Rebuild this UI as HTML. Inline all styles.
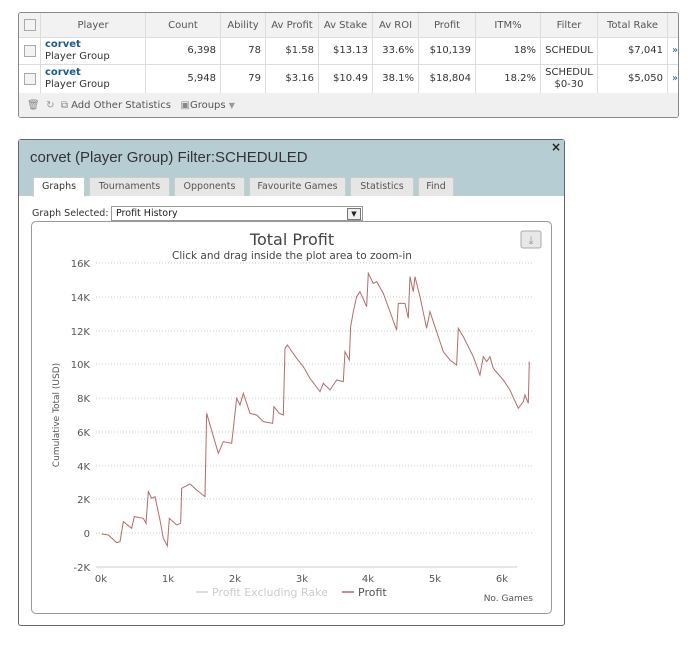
<!DOCTYPE html>
<html><head><style>
body{margin:0;width:700px;height:663px;background:#fff;font-family:"DejaVu Sans","Liberation Sans",sans-serif;position:relative;overflow:hidden}
.tbl{position:absolute;left:18px;top:12px;width:661px;height:106px;border:1px solid #888;border-radius:3px;box-sizing:border-box;overflow:hidden;font-size:10px;color:#333}
.row{position:absolute;left:0;width:100%;border-bottom:1px solid #ddd}
.c{position:absolute;top:0;height:100%;border-right:1px solid #ddd;box-sizing:border-box;display:flex;align-items:center;padding:0 4px;white-space:nowrap}
.cb{width:10px;height:10px;border:1px solid #aaa;background:#f3f3f3}
.r{justify-content:flex-end}.m{justify-content:center}
a{color:#1c5c8c;font-weight:bold;text-decoration:none}
.dlg{position:absolute;left:18px;top:139px;width:547px;height:487px;border:1px solid #666;box-sizing:border-box;border-radius:3px}
.hd{position:absolute;left:0;top:0;width:100%;height:56px;background:#b7cdd4}
.tab{position:absolute;top:37px;height:19px;background:#e6e6e6;border:1px solid #ccc;border-bottom:none;font-size:9.5px;color:#555;text-align:center;line-height:18px;box-sizing:border-box;border-radius:2px 2px 0 0}
</style></head><body>
<div class="tbl">
 <div class="row" style="top:0;height:24px;background:#f2f2f2;color:#555">
  <div class="c m" style="left:0;width:22px"><div class="cb"></div></div>
  <div class="c m" style="left:22px;width:105px">Player</div>
  <div class="c m" style="left:127px;width:75px">Count</div>
  <div class="c m" style="left:202px;width:45px">Ability</div>
  <div class="c m" style="left:247px;width:53px">Av Profit</div>
  <div class="c m" style="left:300px;width:54px">Av Stake</div>
  <div class="c m" style="left:354px;width:46px">Av ROI</div>
  <div class="c m" style="left:400px;width:57px">Profit</div>
  <div class="c m" style="left:457px;width:65px">ITM%</div>
  <div class="c m" style="left:522px;width:57px">Filter</div>
  <div class="c m" style="left:579px;width:70px">Total Rake</div>
 </div>
 <div class="row" style="top:24px;height:27px">
  <div class="c m" style="left:0;width:22px"><div class="cb"></div></div>
  <div class="c" style="left:22px;width:105px;line-height:12px"><div><a>corvet</a><br>Player Group</div></div>
  <div class="c r" style="left:127px;width:75px">6,398</div>
  <div class="c r" style="left:202px;width:45px">78</div>
  <div class="c r" style="left:247px;width:53px">$1.58</div>
  <div class="c r" style="left:300px;width:54px">$13.13</div>
  <div class="c r" style="left:354px;width:46px">33.6%</div>
  <div class="c r" style="left:400px;width:57px">$10,139</div>
  <div class="c r" style="left:457px;width:65px">18%</div>
  <div class="c m" style="left:522px;width:57px;padding:0 1px">SCHEDUL</div>
  <div class="c r" style="left:579px;width:70px">$7,041</div>
  <div class="c" style="left:649px;width:12px;color:#1c5c8c;border:none">»</div>
 </div>
 <div class="row" style="top:51px;height:29px">
  <div class="c m" style="left:0;width:22px"><div class="cb"></div></div>
  <div class="c" style="left:22px;width:105px;line-height:12px"><div><a>corvet</a><br>Player Group</div></div>
  <div class="c r" style="left:127px;width:75px">5,948</div>
  <div class="c r" style="left:202px;width:45px">79</div>
  <div class="c r" style="left:247px;width:53px">$3.16</div>
  <div class="c r" style="left:300px;width:54px">$10.49</div>
  <div class="c r" style="left:354px;width:46px">38.1%</div>
  <div class="c r" style="left:400px;width:57px">$18,804</div>
  <div class="c r" style="left:457px;width:65px">18.2%</div>
  <div class="c m" style="left:522px;width:57px;text-align:center;line-height:12px;padding:0 1px">SCHEDUL<br>$0-30</div>
  <div class="c r" style="left:579px;width:70px">$5,050</div>
  <div class="c" style="left:649px;width:12px;color:#1c5c8c;border:none">»</div>
 </div>
 <div class="row" style="top:80px;height:26px;background:#f0f0f0;border:none;color:#555;line-height:26px;padding-left:8px;box-sizing:border-box">
  <span style="color:#888">🗑</span>&nbsp;&nbsp;<span style="color:#999">↻</span>&nbsp;&nbsp;<span style="color:#888">⧉</span> Add Other Statistics &nbsp;&nbsp;<span style="color:#888">▣</span>Groups <span style="color:#999;font-size:8px">▼</span>
 </div>
</div>

<div class="dlg">
 <div class="hd"></div>
 <div style="position:absolute;left:11px;top:9px;font-size:15px;color:#333;font-family:'Liberation Sans',sans-serif">corvet (Player Group) Filter:SCHEDULED</div>
 <div style="position:absolute;right:3px;top:0px;font-size:12px;font-weight:bold;color:#222">×</div>
 <div class="tab" style="left:14px;width:52px;background:#fff;color:#333;height:20px">Graphs</div>
 <div class="tab" style="left:70px;width:81px">Tournaments</div>
 <div class="tab" style="left:155px;width:71px">Opponents</div>
 <div class="tab" style="left:230px;width:97px">Favourite Games</div>
 <div class="tab" style="left:331px;width:64px">Statistics</div>
 <div class="tab" style="left:399px;width:36px">Find</div>
 <div style="position:absolute;left:13px;top:68px;font-size:9.5px;color:#333">Graph Selected:</div>
 <div style="position:absolute;left:92px;top:66px;width:246px;height:13px;border:1px solid #999;font-size:9.5px;line-height:13px;padding-left:4px;color:#222">Profit History
  <div style="position:absolute;right:1px;top:1px;width:12px;height:10px;border:1px solid #777;background:#eee;font-size:7px;text-align:center;line-height:10px">▼</div></div>
 <div style="position:absolute;left:12px;top:81px;width:521px;height:393px;border:1px solid #999;border-radius:5px;box-sizing:border-box"></div>
</div>

<svg style="position:absolute;left:0;top:0" width="700" height="663">
 <text x="292" y="245" font-size="16" fill="#444" text-anchor="middle" font-family="DejaVu Sans">Total Profit</text>
 <text x="292" y="259" fill="#444" text-anchor="middle" font-family="DejaVu Sans" style="font-size:10.5px">Click and drag inside the plot area to zoom-in</text>
 <rect x="521" y="231" width="20" height="17" rx="2" fill="#e8e8e8" stroke="#aaa"/>
 <text x="531" y="244" font-size="11" fill="#999" text-anchor="middle">⤓</text>
 <g stroke="#ccc" stroke-dasharray="1 2">
  <line x1="96" x2="533" y1="263" y2="263"/><line x1="96" x2="533" y1="297" y2="297"/>
  <line x1="96" x2="533" y1="331" y2="331"/><line x1="96" x2="533" y1="364" y2="364"/>
  <line x1="96" x2="533" y1="398" y2="398"/><line x1="96" x2="533" y1="432" y2="432"/>
  <line x1="96" x2="533" y1="466" y2="466"/><line x1="96" x2="533" y1="499" y2="499"/>
  <line x1="96" x2="533" y1="533" y2="533"/>
 </g>
 <line x1="96" x2="517" y1="567" y2="567" stroke="#ccc"/>
 <g font-size="10" fill="#555" text-anchor="end" font-family="DejaVu Sans">
  <text x="90" y="267">16K</text><text x="90" y="301">14K</text><text x="90" y="335">12K</text>
  <text x="90" y="368">10K</text><text x="90" y="402">8K</text><text x="90" y="436">6K</text>
  <text x="90" y="470">4K</text><text x="90" y="503">2K</text><text x="90" y="537">0</text>
  <text x="90" y="571">-2K</text>
 </g>
 <g font-size="10" fill="#555" text-anchor="middle" font-family="DejaVu Sans">
  <text x="101" y="582">0k</text><text x="168" y="582">1k</text><text x="235" y="582">2k</text>
  <text x="302" y="582">3k</text><text x="368" y="582">4k</text><text x="435" y="582">5k</text><text x="502" y="582">6k</text>
 </g>
 <text x="59" y="415" font-size="9" fill="#555" text-anchor="middle" transform="rotate(-90 59 415)" font-family="DejaVu Sans">Cumulative Total (USD)</text>
 <line x1="196" x2="208" y1="592" y2="592" stroke="#ddd" stroke-width="2"/>
 <text x="212" y="596" font-size="11" fill="#ccc" font-family="DejaVu Sans">Profit Excluding Rake</text>
 <line x1="342" x2="354" y1="592" y2="592" stroke="#c98a8a" stroke-width="2"/>
 <text x="358" y="596" font-size="11" fill="#555" font-family="DejaVu Sans">Profit</text>
 <text x="533" y="601" font-size="9" fill="#555" text-anchor="end" font-family="DejaVu Sans">No. Games</text>
 <g transform="translate(90 260) scale(0.3333)">
 <polyline fill="none" stroke="#b56b6b" stroke-width="3" points="35,822 55,825 80,848 90,845 100,785 125,805 133,770 160,775 168,790 175,695 185,715 195,710 210,780 220,835 232,858 238,775 260,795 272,790 275,685 300,672 320,690 345,710 350,460 385,580 400,545 425,550 440,415 450,435 460,400 480,460 500,465 520,485 548,490 552,440 568,460 580,465 585,265 592,255 620,295 640,320 660,355 690,395 700,370 720,390 740,360 760,365 765,275 778,300 782,200 790,155 800,110 810,95 830,140 835,40 850,70 860,65 880,100 920,210 925,130 945,130 955,175 960,50 970,95 975,50 990,110 1010,205 1020,155 1060,275 1080,300 1100,315 1105,205 1120,230 1150,290 1170,345 1180,290 1190,305 1200,290 1210,325 1240,360 1260,390 1285,445 1300,425 1305,405 1315,430 1318,305"/>
 </g>
</svg>
</body></html>
